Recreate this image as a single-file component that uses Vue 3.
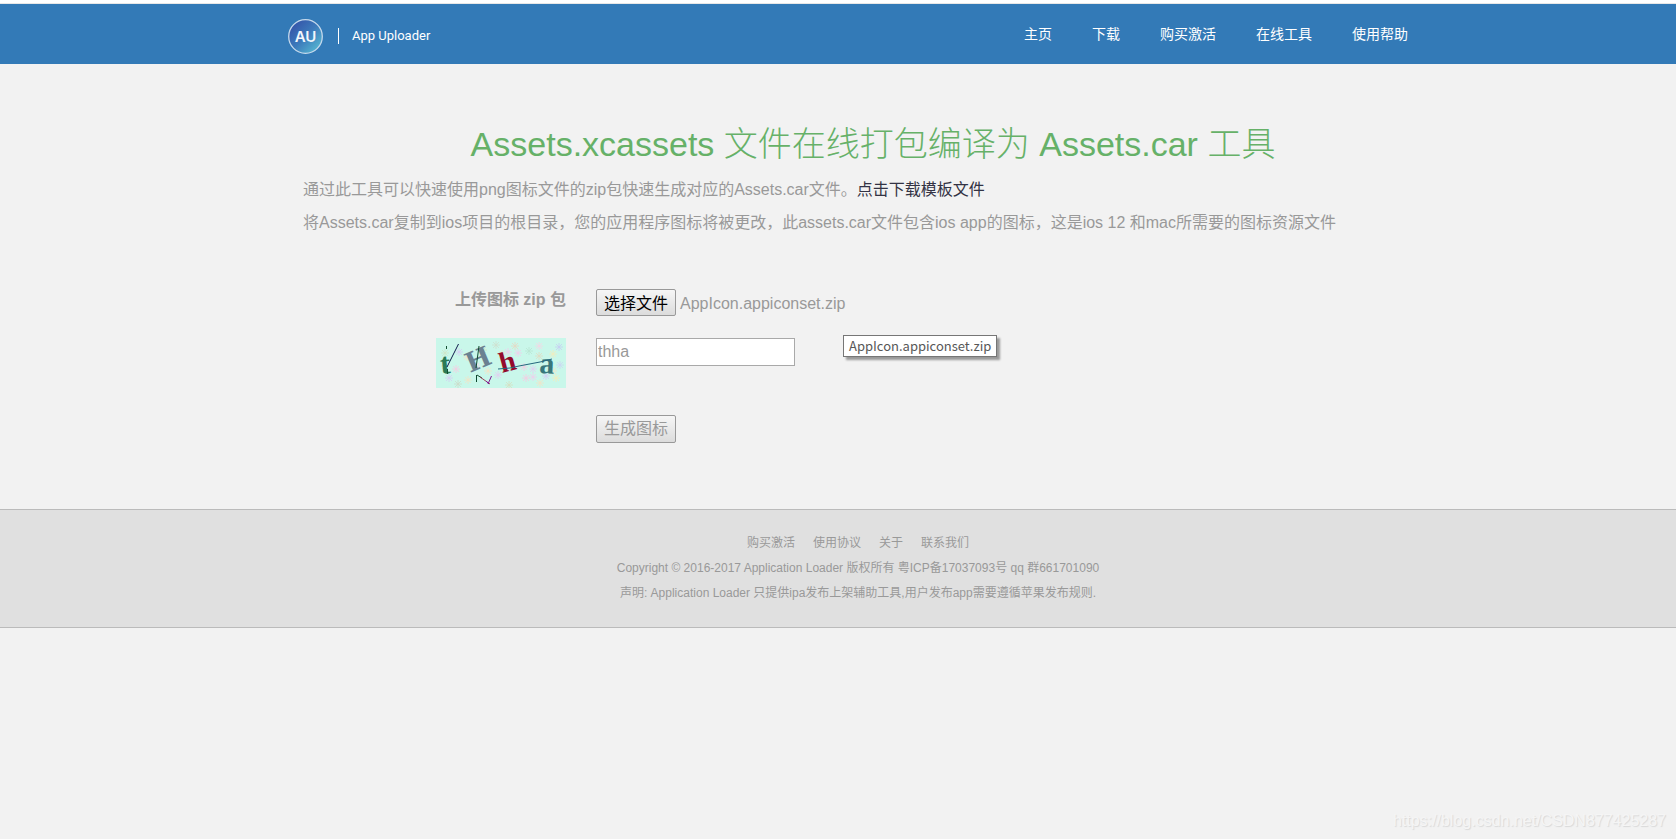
<script setup>
import { ref } from 'vue'

const navItems = ['主页', '下载', '购买激活', '在线工具', '使用帮助']
const footerLinks = ['购买激活', '使用协议', '关于', '联系我们']

const fileInput = ref(null)
const fileName = ref('AppIcon.appiconset.zip')
const code = ref('thha')

function onFile(event) {
  const file = event.target.files[0]
  if (file) fileName.value = file.name
}

const flakes = [
  [9, 15, '#cfe6c8'], [23, 14, '#d5cdf3'], [9, 28, '#cfe6c8'], [31, 19, '#f2e3c6'],
  [20, 31, '#f5cbe2'], [13, 40, '#d5cdf3'], [32, 42, '#f2e3c6'], [22, 46, '#cbdcc9'],
  [40, 28, '#f5cbe2'], [47, 12, '#d5e0c2'], [52, 33, '#f2e3c6'], [62, 37, '#e3cdf0'],
  [60, 7, '#cfe0cf'], [66, 16, '#f2e3c6'], [79, 8, '#e6d8c4'], [72, 14, '#f0cdec'],
  [82, 15, '#f0cdec'], [93, 13, '#b9e6d3'], [103, 8, '#f5d6e4'], [103, 18, '#e0dcc4'],
  [117, 16, '#f2ecbd'], [123, 9, '#c6cdf3'], [124, 27, '#cbd5f3'], [88, 29, '#f5cbe2'],
  [97, 31, '#e3cdf0'], [90, 40, '#f5cbe2'], [97, 39, '#f0cdec'], [110, 38, '#d5cdf3'],
  [117, 33, '#f2e3c6'], [73, 47, '#d5e0c2'], [104, 45, '#f2e3c6'], [120, 40, '#f2ecbd'],
]
</script>

<template>
  <div class="page">
    <header class="topbar">
      <div class="bar-inner">
        <a class="brand" href="#">
          <svg class="logo" viewBox="0 0 36 36" role="img" aria-label="AU">
            <defs>
              <linearGradient id="logoFill" x1="0.1" y1="0.1" x2="0.9" y2="0.9">
                <stop offset="0" stop-color="#3553a8" />
                <stop offset="0.5" stop-color="#3c7abb" />
                <stop offset="1" stop-color="#57b8d2" />
              </linearGradient>
            </defs>
            <circle cx="17.500" cy="18.500" r="16.800" fill="url(#logoFill)" stroke="#c5d9ec" stroke-width="1.3" />
            <text x="17.500" y="24" text-anchor="middle" class="logo-text">AU</text>
          </svg>
          <span class="brand-name">App Uploader</span>
        </a>
        <nav class="nav">
          <a v-for="item in navItems" :key="item" href="#">{{ item }}</a>
        </nav>
      </div>
    </header>

    <main class="content">
      <h1>Assets.xcassets 文件在线打包编译为 Assets.car 工具</h1>
      <p>通过此工具可以快速使用png图标文件的zip包快速生成对应的Assets.car文件。<a href="#">点击下载模板文件</a></p>
      <p>将Assets.car复制到ios项目的根目录，您的应用程序图标将被更改，此assets.car文件包含ios app的图标，这是ios 12 和mac所需要的图标资源文件</p>

      <form class="form" @submit.prevent>
        <label class="field-label" for="zip">上传图标 zip 包</label>
        <div class="file-row">
          <input id="zip" ref="fileInput" type="file" accept=".zip" hidden @change="onFile" />
          <button type="button" class="btn choose" @click="fileInput.click()">选择文件</button>
          <span class="file-name">{{ fileName }}</span>
          <span class="tooltip" role="tooltip">{{ fileName }}</span>
        </div>

        <label class="captcha-label" for="code">
          <svg class="captcha" viewBox="0 0 130 50" role="img" aria-label="验证码">
            <rect width="130" height="50" fill="#c9f7ea" />
            <g v-for="(f, i) in flakes" :key="i" :stroke="f[2]" stroke-width="0.8">
              <path :d="`M${f[0] - 4} ${f[1]}h8M${f[0]} ${f[1] - 4}v8M${f[0] - 3} ${f[1] - 3}l6 6M${f[0] + 3} ${f[1] - 3}l-6 6`" />
            </g>
            <g class="glyphs">
              <text x="5" y="36" font-size="30" fill="#2c7a55" transform="rotate(-5 5 36)">t</text>
              <text x="34" y="35" font-size="27" fill="#6a8191" class="wide" transform="rotate(-23 34 35)">H</text>
              <text x="66" y="35" font-size="29" fill="#930b2c" transform="rotate(-15 66 35)">h</text>
              <text x="103" y="35" font-size="30" fill="#38777b" transform="rotate(3 103 35)">a</text>
            </g>
            <g fill="none" stroke-width="1">
              <path d="M22.500 6L11 29" stroke="#101b4c" />
              <path d="M10.500 8v3M11.500 31v5" stroke="#155033" />
              <path d="M43 8L40 30M40.500 37v7" stroke="#0e4a30" />
              <path d="M41 37l5 3" stroke="#155033" />
              <path d="M44 39L54 46" stroke="#99445a" />
              <path d="M55.500 38L52 46M50 43l3 3" stroke="#811c93" />
              <path d="M62 31L74 30L83 28L104 24L116 21" stroke="#26677f" />
            </g>
          </svg>
        </label>
        <div class="code-row">
          <input id="code" v-model="code" class="code" type="text" />
        </div>

        <div class="submit-row">
          <button type="submit" class="btn">生成图标</button>
        </div>
      </form>
    </main>

    <footer class="footer">
      <nav class="footer-links">
        <a v-for="link in footerLinks" :key="link" href="#">{{ link }}</a>
      </nav>
      <div>Copyright © 2016-2017 Application Loader 版权所有 粤ICP备17037093号 qq 群661701090</div>
      <div>声明: Application Loader 只提供ipa发布上架辅助工具,用户发布app需要遵循苹果发布规则.</div>
    </footer>

    <div class="watermark">https://blog.csdn.net/CSDN877425287</div>
  </div>
</template>

<style>
body {
  margin: 0;
  background: #f2f2f2;
}
</style>

<style scoped>
.page {
  box-sizing: border-box;
  position: relative;
  min-height: 100vh;
  border-top: 3px solid #fff;
  background: #f2f2f2;
  color: #999;
  font: 16px/33px "Liberation Sans", "Noto Sans CJK SC", sans-serif;
}
a {
  color: inherit;
  text-decoration: none;
}
.topbar {
  background: #337ab7;
  border-top: 1px solid #e7e7e7;
  height: 60px;
}
.bar-inner {
  display: flex;
  justify-content: space-between;
  max-width: 1120px;
  margin: 0 auto;
  padding-left: 20px;
  color: #fff;
}
.brand {
  display: flex;
  align-items: center;
  height: 60px;
  padding-top: 4px;
  box-sizing: border-box;
}
.logo {
  width: 36px;
  height: 36px;
}
.logo-text {
  font: 600 15px Inter, sans-serif;
  fill: #f4f7fc;
}
.brand-name {
  margin-left: 14px;
  padding-left: 13px;
  border-left: 1px solid #fff;
  font: 13px/16px Roboto, sans-serif;
}
.nav {
  display: flex;
  gap: 40px;
  font-size: 14px;
  line-height: 60px;
}
.content {
  max-width: 1140px;
  margin: 0 auto;
  padding: 58px 0 66px 70px;
  box-sizing: content-box;
}
h1 {
  margin: 0;
  padding-bottom: 6px;
  color: #66b168;
  font-size: 34px;
  font-weight: 300;
  line-height: 45px;
  text-align: center;
}
p {
  margin: 0;
}
p a {
  color: #333344;
}
.form {
  display: grid;
  grid-template-columns: 263px 1fr;
  column-gap: 30px;
  padding-top: 50px;
}
.field-label {
  font-weight: bold;
  line-height: 22px;
  text-align: right;
}
.file-row {
  position: relative;
  display: flex;
  align-items: center;
  gap: 4px;
  height: 27px;
  margin-bottom: 22px;
}
.btn {
  box-sizing: border-box;
  height: 28px;
  padding: 0 7px;
  border: 1px solid #999;
  border-radius: 2px;
  background: linear-gradient(#f6f6f6, #dcdcdc);
  color: #999;
  font: 16px/24px "Liberation Sans", "Noto Sans CJK SC", sans-serif;
}
.choose {
  height: 27px;
  padding-top: 2px;
  color: #000;
}
.file-name {
  padding-top: 2px;
}
.tooltip {
  position: absolute;
  top: 46px;
  left: 247px;
  padding: 0 5px;
  border: 1px solid #767676;
  background: #fff;
  box-shadow: 3px 3px 2px #999;
  color: #575757;
  font: 13px/20px "Noto Sans CJK SC", sans-serif;
}
.captcha-label {
  text-align: right;
}
.captcha {
  display: block;
  width: 130px;
  height: 50px;
  margin-left: auto;
}
.glyphs {
  font-family: "Liberation Serif", serif;
  font-weight: bold;
}
.wide {
  font-family: "DejaVu Serif", serif;
}
.code-row {
  height: 77px;
}
.code {
  box-sizing: border-box;
  display: block;
  width: 199px;
  height: 28px;
  padding: 0 1px;
  border: 1px solid #a9a9a9;
  background: #fff;
  color: #999;
  font: 16px/24px "Liberation Sans", sans-serif;
}
.submit-row {
  grid-column: 2;
  height: 28px;
  line-height: 28px;
}
.submit-row .btn {
  display: block;
}
.footer {
  padding: 21px 0 21px 40px;
  border: solid #bbb;
  border-width: 1px 0;
  background: #e0e0e0;
  font-size: 12px;
  line-height: 25px;
  text-align: center;
}
.footer-links {
  display: flex;
  justify-content: center;
  gap: 18px;
}
.watermark {
  position: absolute;
  right: 10px;
  bottom: 8px;
  color: #f5f5f5;
  font-size: 16px;
  line-height: 20px;
  text-shadow: 1px 1px 1px #d8d8d8;
}
</style>
